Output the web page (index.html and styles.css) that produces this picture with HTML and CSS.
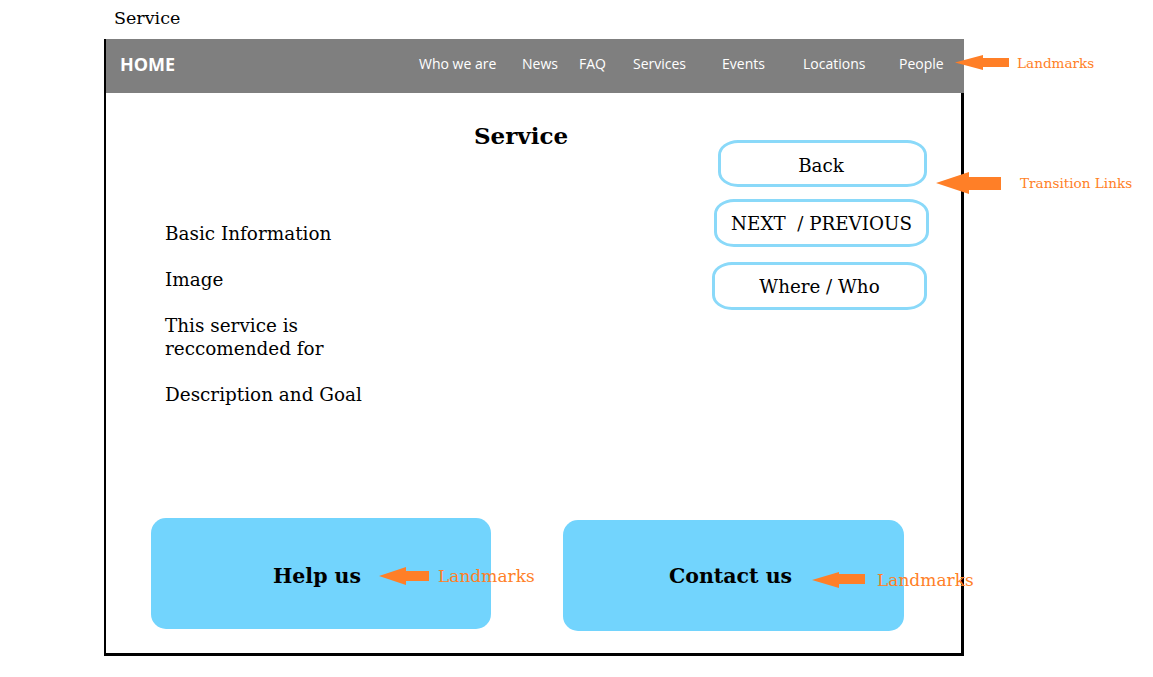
FILE: index.html
```html
<!DOCTYPE html>
<html lang="en">
<head>
<meta charset="utf-8">
<title>Service</title>
<link rel="stylesheet" href="styles.css">
</head>
<body>
<div class="page">
  <div class="page-title">Service</div>

  <div class="frame">
    <nav class="nav">
      <span class="nav-home">HOME</span>
      <span class="nav-item">Who we are</span>
      <span class="nav-item">News</span>
      <span class="nav-item">FAQ</span>
      <span class="nav-item">Services</span>
      <span class="nav-item">Events</span>
      <span class="nav-item">Locations</span>
      <span class="nav-item">People</span>
    </nav>

    <div class="content">
      <div class="left">
        <h1 class="heading">Service</h1>
        <div class="info-list">
          <p>Basic Information</p>
          <p>Image</p>
          <p>This service is reccomended for</p>
          <p>Description and Goal</p>
        </div>
      </div>
      <div class="links">
        <a class="link-btn link-back">Back</a>
        <a class="link-btn link-next">NEXT &nbsp;/ PREVIOUS</a>
        <a class="link-btn link-where">Where / Who</a>
      </div>
    </div>

    <div class="boxes">
      <div class="box box-help">Help us</div>
      <div class="box box-contact">Contact us</div>
    </div>
  </div>

  <div class="note note-nav">
    <svg width="54" height="16" viewBox="0 0 54 16"><polygon points="0,7.5 28,0 28,3 54,3 54,12 28,12 28,15" fill="#ff7f27"/></svg>
    <span class="note-label">Landmarks</span>
  </div>
  <div class="note note-trans">
    <svg width="65" height="22" viewBox="0 0 65 22"><polygon points="0,11 33,0 33,5 65,5 65,18 33,18 33,22" fill="#ff7f27"/></svg>
    <span class="note-label">Transition Links</span>
  </div>
  <div class="note note-help">
    <svg width="50" height="18" viewBox="0 0 50 18"><polygon points="0,9 27,0 27,4 50,4 50,14 27,14 27,18" fill="#ff7f27"/></svg>
    <span class="note-label note-label-lg">Landmarks</span>
  </div>
  <div class="note note-contact">
    <svg width="53" height="16" viewBox="0 0 53 16"><polygon points="0,8 27,0 27,2 53,2 53,12 27,12 27,16" fill="#ff7f27"/></svg>
    <span class="note-label note-label-lg">Landmarks</span>
  </div>
</div>
</body>
</html>
```

FILE: styles.css
```css
* { box-sizing: border-box; }

html, body {
  margin: 0;
  padding: 0;
  background: #fff;
}

body {
  font-family: "DejaVu Serif", "Liberation Serif", serif;
  color: #000;
}

.page {
  position: relative;
  width: 1153px;
  height: 677px;
  overflow: hidden;
}

.page-title {
  padding: 8px 0 0 114px;
  font-size: 17.5px;
  line-height: 20px;
  height: 28px;
}

.frame {
  margin: 11px 0 0 104px;
  width: 860px;
  height: 617px;
  border-left: 2px solid #000;
  border-right: 3px solid #000;
  border-bottom: 3px solid #000;
  display: flex;
  flex-direction: column;
}

.nav {
  height: 54px;
  margin-right: -3px;
  background: #7f7f7f;
  display: grid;
  grid-template-columns: 313px 103px 57px 54px 89px 81px 96px 1fr;
  align-items: center;
  font-family: "Open Sans", "Noto Sans", sans-serif;
  color: #fff;
}

.nav-home {
  padding-left: 14px;
  font-size: 18px;
  font-weight: 700;
  line-height: 20px;
  margin-bottom: 4px;
}

.nav-item {
  font-size: 14px;
  line-height: 18px;
  white-space: nowrap;
  margin-bottom: 4px;
}

.content {
  display: flex;
  padding: 29px 32px 0 59px;
}

.left {
  flex: 1;
}

.heading {
  margin: 0;
  padding-left: 309px;
  font-size: 23px;
  font-weight: 700;
  line-height: 28px;
}

.info-list {
  margin-top: 72px;
  width: 240px;
  display: flex;
  flex-direction: column;
  gap: 23px;
}

.info-list p {
  margin: 0;
  font-size: 18.4px;
  line-height: 23px;
}

.links {
  width: 217px;
  padding-top: 18px;
  display: flex;
  flex-direction: column;
}

.link-btn {
  display: flex;
  align-items: center;
  justify-content: center;
  border: 3px solid #8ad9f9;
  border-radius: 20px / 15px;
  font-size: 18.3px;
  color: #000;
  white-space: nowrap;
}

.link-back {
  margin-left: 6px;
  width: 209px;
  height: 47px;
  padding: 3px 3px 0 0;
}

.link-next {
  margin-top: 12px;
  margin-left: 2px;
  width: 215px;
  height: 48px;
}

.link-where {
  margin-top: 15px;
  width: 215px;
  height: 48px;
}

.boxes {
  margin-top: auto;
  display: flex;
  align-items: flex-start;
  gap: 72px;
  padding: 0 57px 22px 45px;
}

.box {
  width: 340px;
  height: 111px;
  background: #72d4fd;
  border-radius: 15px;
  display: flex;
  align-items: center;
  justify-content: center;
  font-size: 20.5px;
  font-weight: 700;
}

.box-help {
  padding: 4px 8px 0 0;
}

.box-contact {
  width: 341px;
  margin-top: 2px;
  padding-right: 6px;
}

.note {
  position: absolute;
  display: flex;
  align-items: center;
}

.note svg { display: block; flex: none; }

.note-label {
  color: #ff7f27;
  font-size: 13.6px;
  line-height: 16px;
  white-space: nowrap;
}

.note-label-lg {
  font-size: 17px;
  line-height: 18px;
}

.note-nav { left: 955px; top: 55px; gap: 8px; }
.note-trans { left: 936px; top: 172px; gap: 19px; }
.note-help { left: 379px; top: 567px; gap: 9px; }
.note-contact { left: 812px; top: 571px; gap: 12px; }
```
